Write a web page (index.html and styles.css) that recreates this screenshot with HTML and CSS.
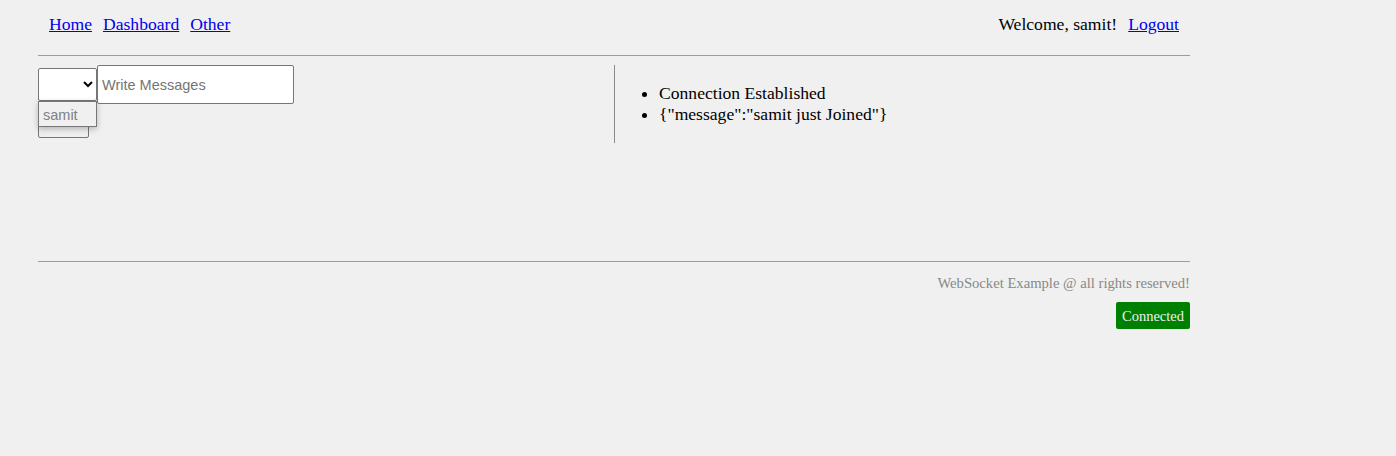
FILE: index.html
```html
<!DOCTYPE html>
<html lang="en">
<head>
<meta charset="utf-8">
<title>WebSocket Example</title>
<link rel="stylesheet" href="styles.css">
</head>
<body>
<div class="container">
  <header class="header">
    <nav class="nav">
      <a href="#">Home</a>
      <a href="#">Dashboard</a>
      <a href="#">Other</a>
    </nav>
    <div class="user">
      <span>Welcome, samit!</span>
      <a href="#">Logout</a>
    </div>
  </header>
  <main class="main">
    <section class="left">
      <div class="form-row">
        <select class="select"><option></option></select><input class="msg" type="text" placeholder="Write Messages">
      </div>
      <button class="send" type="button"></button>
      <div class="suggest">samit</div>
    </section>
    <section class="right">
      <ul class="log">
        <li>Connection Established</li>
        <li>{"message":"samit just Joined"}</li>
      </ul>
    </section>
  </main>
  <footer class="footer">
    <p class="rights">WebSocket Example @ all rights reserved!</p>
    <div class="status-row"><span class="badge">Connected</span></div>
  </footer>
</div>
</body>
</html>
```
FILE: styles.css
```css
html, body {
  margin: 0;
  padding: 0;
}
body {
  background: #f0f0f0;
  font-family: "Liberation Serif", "Times New Roman", serif;
  font-size: 17.6px;
  color: #000;
}
a {
  color: #0000ee;
}
.container {
  width: 1152px;
  margin-left: 38px;
}
.header {
  display: flex;
  justify-content: space-between;
  align-items: center;
  padding: 14px 11px 21px;
  border-bottom: 1px solid #9c9c9c;
  line-height: 20px;
}
.nav {
  display: flex;
  gap: 11px;
}
.user {
  display: flex;
  gap: 11px;
}
.main {
  display: flex;
  margin-top: 9px;
  margin-bottom: 118px;
}
.left {
  position: relative;
  width: 576px;
}
.form-row {
  display: flex;
  align-items: center;
  height: 39px;
}
.select {
  width: 59px;
  height: 33px;
  margin: 0;
  border: 1px solid #767676;
  border-radius: 2px;
  background: #fff;
  font-family: "Liberation Sans", Arial, sans-serif;
  font-size: 14.5px;
}
.msg {
  width: 197px;
  height: 39px;
  box-sizing: border-box;
  margin: 0;
  padding: 1px 4px;
  border: 1px solid #767676;
  border-radius: 2px;
  background: #fff;
  font-family: "Liberation Sans", Arial, sans-serif;
  font-size: 14.5px;
}
.msg::placeholder {
  color: #757575;
}
.send {
  display: block;
  width: 51px;
  height: 34px;
  margin: 0;
  border: 1px solid #767676;
  border-radius: 2px;
  background: #efefef;
}
.suggest {
  position: absolute;
  left: 0;
  top: 36px;
  width: 59px;
  height: 26px;
  box-sizing: border-box;
  padding: 4px 4px 2px;
  border: 1px solid #777;
  background: #f0f0f0;
  box-shadow: 0 2px 6px rgba(0, 0, 0, 0.25);
  font-family: "Liberation Sans", Arial, sans-serif;
  font-size: 14.5px;
  line-height: 18px;
  color: #808080;
}
.right {
  flex: 1;
  border-left: 1px solid #8a8a8a;
}
.log {
  margin: 18px 0;
  padding-left: 44px;
  line-height: 21px;
}
.footer {
  border-top: 1px solid #9c9c9c;
  text-align: right;
}
.rights {
  margin: 12px 0 0;
  font-size: 14.65px;
  line-height: 18px;
  color: #888;
}
.status-row {
  display: flex;
  justify-content: flex-end;
  margin-top: 10px;
}
.badge {
  display: inline-block;
  height: 27px;
  box-sizing: border-box;
  padding: 5px 6px 4px;
  border-radius: 2px;
  background: #008000;
  color: #f0f0f0;
  font-size: 14.5px;
  line-height: 18px;
}
```
